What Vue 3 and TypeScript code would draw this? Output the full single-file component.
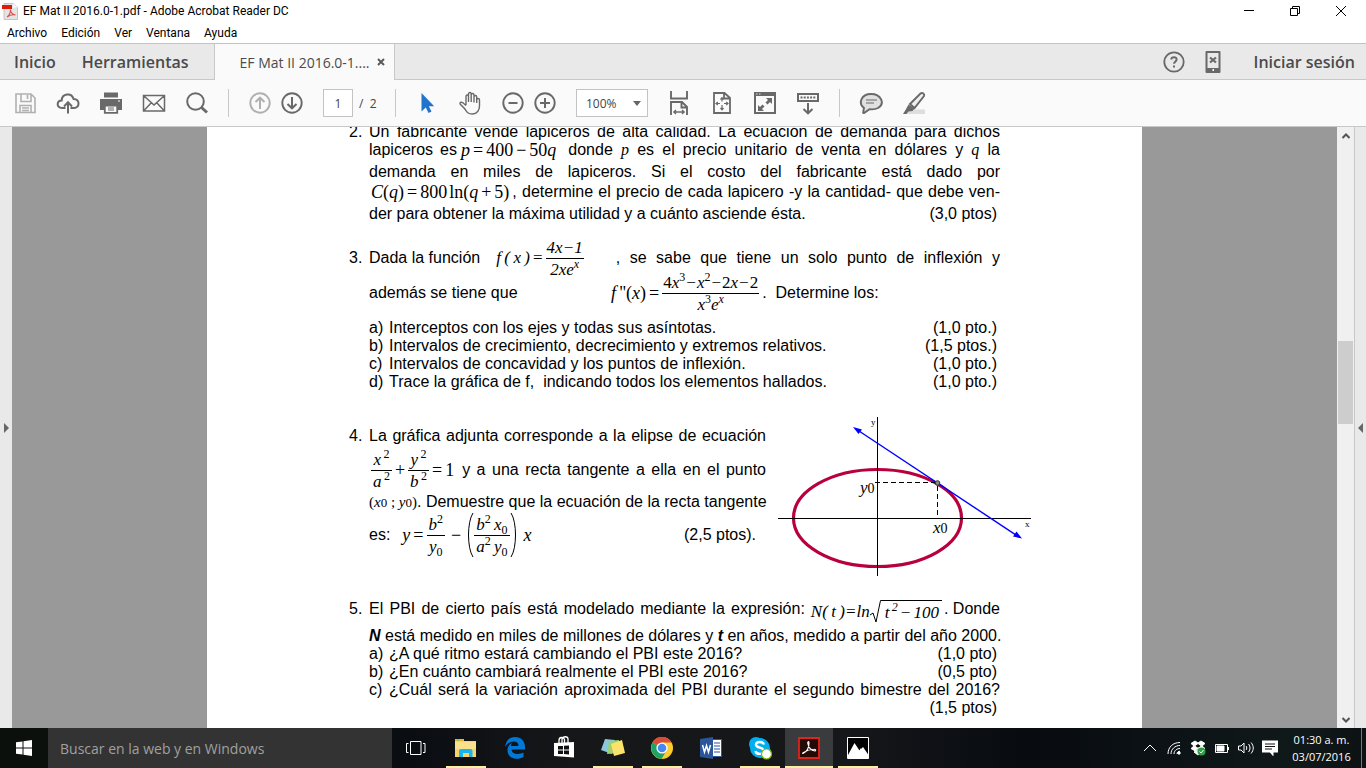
<script setup lang="ts">
import { ref } from 'vue'

const menus: string[] = ['Archivo', 'Edición', 'Ver', 'Ventana', 'Ayuda']
const page = ref('1')
const zoom = ref('100%')
const thumb = { top: 34.8, height: 14.6 }

interface Part { mark: string; text: string; points: string }
const functionParts: Part[] = [
  { mark: 'a)', text: 'Interceptos con los ejes y todas sus asíntotas.', points: '(1,0 pto.)' },
  { mark: 'b)', text: 'Intervalos de crecimiento, decrecimiento y extremos relativos.', points: '(1,5 ptos.)' },
  { mark: 'c)', text: 'Intervalos de concavidad y los puntos de inflexión.', points: '(1,0 pto.)' },
  { mark: 'd)', text: 'Trace la gráfica de f,\u00a0 indicando todos los elementos hallados.', points: '(1,0 pto.)' },
]
const gdpParts: Part[] = [
  { mark: 'a)', text: '¿A qué ritmo estará cambiando el PBI este 2016?', points: '(1,0 pto)' },
  { mark: 'b)', text: '¿En cuánto cambiará realmente el PBI este 2016?', points: '(0,5 pto)' },
]
</script>

<template>
  <div class="desktop">
    <header class="titlebar">
      <svg class="app-icon" width="16" height="17" viewBox="0 0 16 17">
        <path d="M2 .5h9l4.500 4V16.500H2z" fill="#e4e4e4" stroke="#c4c4c4" />
        <path d="M11 .5v4h4.500z" fill="#fafafa" />
        <path d="M0 2h10v4H0z" fill="#e01b0c" />
        <path d="M5 14c2-1.500 3.500-4 3.500-7.500 0 3 2 5 5 5.500-3-.6-6 .3-8.500 2z" fill="none" stroke="#e0504a" stroke-width="1.100" />
      </svg>
      <h1>EF Mat II 2016.0-1.pdf - Adobe Acrobat Reader DC</h1>
      <div class="window-controls">
        <button aria-label="Minimizar"><svg width="12" height="12" viewBox="0 0 12 12"><path d="M1 5.500h10" /></svg></button>
        <button aria-label="Restaurar"><svg width="12" height="12" viewBox="0 0 12 12"><path d="M1.500 3.500h7v7h-7zM3.500 3.500v-2h7v7h-2" /></svg></button>
        <button aria-label="Cerrar"><svg width="12" height="12" viewBox="0 0 12 12"><path d="M1 1l10 10M11 1L1 11" /></svg></button>
      </div>
    </header>

    <nav class="menubar"><button v-for="m in menus" :key="m">{{ m }}</button></nav>

    <div class="tabs">
      <button class="tab home">Inicio</button>
      <button class="tab tools">Herramientas</button>
      <div class="tab document">
        <span>EF Mat II 2016.0-1....</span>
        <button aria-label="Cerrar pestaña"><svg width="8" height="8" viewBox="0 0 8 8"><path d="M1 1l6 6M7 1L1 7" stroke="#5b5b5b" stroke-width="2" /></svg></button>
      </div>
      <div class="account">
        <button aria-label="Ayuda"><svg class="ic" width="24" height="24" viewBox="0 0 24 24">
          <circle cx="12" cy="12" r="9.700" stroke-width="1.800" />
          <path d="M9.300 9.500c.2-3.200 5.400-3 5.300 0 0 2-2.500 2-2.500 4.200M12 15.500v2" stroke-width="2" />
        </svg></button>
        <button aria-label="Dispositivo móvil"><svg class="ic" width="24" height="24" viewBox="0 0 24 24">
          <path d="M5.500 2h13v20h-13z" stroke-width="2" stroke-linejoin="round" /><path d="M5 18h14v4H5z" class="fill" />
          <path d="M9 7.500l6 5M15 7.500l-6 5" stroke-width="2.200" /><path d="M11.500 19h1.500v2h-1.500z" fill="#fff" stroke="none" />
        </svg></button>
        <button class="signin">Iniciar sesión</button>
      </div>
    </div>

    <div class="toolbar">
      <button class="off" aria-label="Guardar"><svg class="ic" width="24" height="24" viewBox="0 0 24 24">
        <path d="M3 3h15l4 4v14.500H3zM8 3v7.500h10V3M14.500 4v4M7 21v-6.500h11V21M9 17h7M9 19.500h7" stroke-width="1.600" />
      </svg></button>
      <button aria-label="Subir"><svg class="ic" width="24" height="24" viewBox="0 0 24 24">
        <path d="M9.500 17H6c-6 0-5.500-7.500-.3-7.600C6 2.500 15.500 1 17.600 8c6.500-.2 6.500 9 .4 9h-3.500" stroke-width="2" />
        <path d="M12 22.500V12M8 15.500l4-4.200 4 4.200" stroke-width="2" />
      </svg></button>
      <button aria-label="Imprimir"><svg class="ic" width="24" height="24" viewBox="0 0 24 24">
        <path d="M5 1.500h14v5H5zM1 8h22v11h-4v-4.500H5V19H1z" class="fill" />
        <path d="M5.800 14.500h12.400v7.300H5.800z" stroke-width="1.800" fill="#fafafa" /><path d="M9 17h6M9 19h6" stroke-width="1" /><path d="M19 10h2" stroke="#fff" />
      </svg></button>
      <button aria-label="Correo"><svg class="ic" width="24" height="24" viewBox="0 0 24 24">
        <path d="M1.500 4.500h21v15.500h-21zM2 5l10 9L22 5M2 19.500l7.500-8M22 19.500l-7.500-8" stroke-width="1.500" />
      </svg></button>
      <button aria-label="Buscar"><svg class="ic" width="24" height="24" viewBox="0 0 24 24">
        <circle cx="10.500" cy="10.500" r="8.300" stroke-width="2" /><path d="M16.500 16.500l5.500 5" stroke-width="3" />
      </svg></button>
      <i class="sep"></i>
      <div class="pair">
        <button class="off" aria-label="Página anterior"><svg class="ic" width="24" height="24" viewBox="0 0 24 24">
          <circle cx="12" cy="12" r="9.700" stroke-width="1.900" /><path d="M12 18V7M7.500 11L12 6.700l4.500 4.300" stroke-width="2" />
        </svg></button>
        <button aria-label="Página siguiente"><svg class="ic" width="24" height="24" viewBox="0 0 24 24">
          <circle cx="12" cy="12" r="9.700" stroke-width="1.900" /><path d="M12 6v11M7.500 13l4.500 4.300 4.500-4.300" stroke-width="2" />
        </svg></button>
      </div>
      <div class="pager">
        <input id="page" v-model="page" aria-label="Página" />
        <label for="page">/&nbsp; 2</label>
      </div>
      <i class="sep"></i>
      <button aria-label="Selección"><svg width="24" height="24" viewBox="0 0 24 24">
        <path d="M6.500 2v18.500l4.300-4 2.700 5.500 3-1.500-2.700-5.300h5.400z" fill="#2273cc" />
      </svg></button>
      <button aria-label="Mano"><svg class="ic" width="24" height="24" viewBox="0 0 24 24">
        <path d="M8 14V5.500c0-2 2.500-2 2.500 0V11M10.500 5V3c0-2 2.700-2 2.700 0v8M13.200 4c0-2 2.800-2 2.800 0v7.500M16 6c0-2 2.700-2 2.700 0v6M18.700 9c0-2 2.800-2 2.800 0v6c0 4-2.500 8-7 8-5 0-6-2.500-8-5.500l-4-4c-1.500-2 .8-3 2.300-1.700L8 14.500" stroke-width="1.400" />
      </svg></button>
      <div class="pair">
        <button aria-label="Alejar"><svg class="ic" width="24" height="24" viewBox="0 0 24 24">
          <circle cx="12" cy="12" r="9.700" stroke-width="1.900" /><path d="M7.500 12h9" stroke-width="2" />
        </svg></button>
        <button aria-label="Acercar"><svg class="ic" width="24" height="24" viewBox="0 0 24 24">
          <circle cx="12" cy="12" r="9.700" stroke-width="1.900" /><path d="M7 12h10M12 7v10" stroke-width="2" />
        </svg></button>
      </div>
      <div class="zoom">
        <select v-model="zoom" aria-label="Nivel de zoom"><option>100%</option><option>125%</option></select>
        <svg width="8" height="5" viewBox="0 0 8 5"><path d="M0 0h8L4 5z" fill="#666" /></svg>
      </div>
      <button aria-label="Ajustar ancho"><svg class="ic" width="24" height="24" viewBox="0 0 24 24">
        <path d="M4 0v7.500h16V0M4 24V11h11l5 5v8M14.500 11v5.500H20" stroke-width="1.900" />
        <path d="M7 21h10M9 19l-2.200 2L9 23M15 19l2.200 2-2.200 2" stroke-width="1.300" />
      </svg></button>
      <button aria-label="Ajustar página"><svg class="ic" width="24" height="24" viewBox="0 0 24 24">
        <path d="M4 2h10.500l5.500 5v15H4zM14 2v5.500h6" stroke-width="1.800" />
        <path d="M12 7v3.500M12 14v4.500M6 12.500h4M14 12.500h4M10.500 8.500L12 6.700l1.500 1.800M10.500 17l1.500 1.800 1.500-1.800M7.800 11L6 12.500 7.800 14M16.200 11l1.800 1.500-1.800 1.500" stroke-width="1.200" />
      </svg></button>
      <button aria-label="Pantalla completa"><svg class="ic" width="24" height="24" viewBox="0 0 24 24">
        <path d="M2 2h20v20H2z" stroke-width="2" /><path d="M1 1h22v4H1z" class="fill" />
        <path d="M3 3h1.500M6 3h1.500" stroke="#ddd" stroke-width="1" /><path d="M19 7v6l-2-2-2.500 2.500-2-2L15 9l-2-2zM5 20v-6l2 2 2.500-2.500 2 2L9 18l2 2z" class="fill" />
      </svg></button>
      <button aria-label="Barra de herramientas"><svg class="ic" width="24" height="24" viewBox="0 0 24 24">
        <path d="M2 3h20v7H2z" stroke-width="2" /><path d="M4.500 6.500h15" stroke-width="2" stroke-dasharray="2 1.200" />
        <path d="M12 12v10M7.500 18l4.500 4.300 4.500-4.300" stroke-width="2" />
      </svg></button>
      <i class="sep"></i>
      <button aria-label="Comentario"><svg class="ic" width="24" height="24" viewBox="0 0 24 24">
        <path d="M5 17C-1 12.500 2 3 12 3s14.500 9.500 7 14c-3 1.700-6 1.500-8.500 1.200L5 22c-1 .2-1-.2-.8-1z" stroke-width="1.900" fill="#e0e0e0" />
        <path d="M7 9h11M7 12h8" stroke-width="1.200" />
      </svg></button>
      <button aria-label="Resaltar"><svg class="ic" width="24" height="24" viewBox="0 0 24 24">
        <path d="M8 18.500h15V23H5z" fill="#dedede" stroke="none" />
        <path d="M8 13L18.500 2.500c2-1.500 4.500.5 3.500 2.500L12.500 17z" stroke-width="1.900" fill="#f0f0f0" />
        <path d="M6.500 13.500l6 4-2 2.500-4 .5L4.500 23H1l2.500-4z" class="fill" />
      </svg></button>
    </div>

    <main class="workspace">
      <button class="rail left" aria-label="Mostrar panel izquierdo"><svg width="5" height="10" viewBox="0 0 5 10"><path d="M0 0l5 5-5 5z" fill="#666" /></svg></button>
      <div class="canvas">
        <article class="paper">
          <section class="question first">
            <b class="number">2.</b>
            <div>
              <p class="justify">Un fabricante vende lapiceros de alta calidad. La ecuación de demanda para dichos</p>
              <p class="line">
                <span class="lead-wide">lapiceros es</span>
                <span class="math"><i>p</i><s>=</s>400<s>−</s>50<i>q</i></span>
                <span class="justify after-mid">donde <i class="var">p</i> es el precio unitario de venta en dólares y <i class="var">q</i> la</span>
              </p>
              <p class="justify gap-4">demanda en miles de lapiceros. Si el costo del fabricante está dado por</p>
              <p class="line gap-2 indent">
                <span class="math"><i>C</i>(<i>q</i>)<s>=</s>800<em>ln</em>(<i>q</i><s>+</s>5)</span>
                <span class="justify after-thin">, determine el precio de cada lapicero -y la cantidad- que debe ven-</span>
              </p>
              <p class="line gap-4"><span>der para obtener la máxima utilidad y a cuánto asciende ésta.</span><span class="points">(3,0 ptos)</span></p>
            </div>
          </section>

          <section class="question third">
            <b class="number">3.</b>
            <div>
              <p class="line">
                <span>Dada la función</span>
                <span class="math after-wide slanted">f&thinsp;(&thinsp;x&thinsp;)<s>=</s><span class="frac"><span>4x<s>−</s>1</span><span>2xe<sup>x</sup></span></span></span>
                <span class="justify after-far">, se sabe que tiene un solo punto de inflexión y</span>
              </p>
              <p class="line gap-17">
                <span class="wide-cell">además se tiene que</span>
                <span class="math"><i>f</i>&thinsp;''(<i>x</i>)<s>=</s><span class="frac"><span>4<i>x</i><sup>3</sup><s>−</s><i>x</i><sup>2</sup><s>−</s>2<i>x</i><s>−</s>2</span><span><i>x</i><sup>3</sup><i>e</i><sup><i>x</i></sup></span></span></span>
                <span class="after-thin">.&nbsp; Determine los:</span>
              </p>
              <ol class="parts gap-17">
                <li v-for="p in functionParts" :key="p.mark" class="line"><span class="mark">{{ p.mark }}</span><span>{{ p.text }}</span><span class="points">{{ p.points }}</span></li>
              </ol>
            </div>
          </section>

          <section class="question fourth">
            <b class="number">4.</b>
            <div class="with-figure">
              <div>
                <p class="justify">La gráfica adjunta corresponde a la elipse de ecuación</p>
                <p class="line gap-16 indent">
                  <span class="math roomy"><span class="frac"><span><i>x</i><sup>&thinsp;2</sup></span><span><i>a</i><sup>&thinsp;2</sup></span></span><s>+</s><span class="frac"><span><i>y</i><sup>&thinsp;2</sup></span><span><i>b</i><sup>&thinsp;2</sup></span></span><s>=</s>1</span>
                  <span class="justify after-near">y a una recta tangente a ella en el punto</span>
                </p>
                <p class="line gap-14"><span class="pt">(<i>x</i><small>0</small> ; <i>y</i><small>0</small>)</span><span>. Demuestre que la ecuación de la recta tangente</span></p>
                <p class="line gap-15">
                  <span>es:</span>
                  <span class="math roomy after-mid"><i>y</i><s>=</s><span class="frac"><span><i>b</i><sup>2</sup></span><span><i>y</i><sub>0</sub></span></span><s class="loose">−</s>
                    <svg class="paren" width="7" height="46" viewBox="0 0 7 46"><path d="M6 1C0 10 0 36 6 45" /></svg>
                    <span class="frac"><span><i>b</i><sup>2</sup>&thinsp;<i>x</i><sub>0</sub></span><span><i>a</i><sup>2</sup>&thinsp;<i>y</i><sub>0</sub></span></span>
                    <svg class="paren" width="7" height="46" viewBox="0 0 7 46"><path d="M1 1c6 9 6 35 0 44" /></svg>
                    <i class="tail">x</i></span>
                  <span class="points far">(2,5 ptos).</span>
                </p>
              </div>
              <svg class="figure" width="254" height="159" viewBox="0 0 254 159">
                <ellipse cx="99.500" cy="101" rx="84" ry="48.500" fill="none" stroke="#b8003c" stroke-width="3.200" />
                <path d="M0 101.500h253M99.500 0v159" stroke="#000" fill="none" />
                <path d="M97 65.500h62" stroke="#000" stroke-dasharray="5 3" /><path d="M159.500 69v31" stroke="#000" stroke-dasharray="5 3" />
                <path d="M78 12l163 108" stroke="#00f" stroke-width="1.400" />
                <path d="M75 10l9 2.500-3.500 4.500zM244 121.500l-9-2 3.500-5z" fill="#00f" />
                <circle cx="159.500" cy="66" r="2.300" fill="#888" stroke="#333" />
                <text x="82" y="76" class="label"><tspan>y</tspan><tspan class="idx">0</tspan></text>
                <text x="155" y="116" class="label"><tspan>x</tspan><tspan class="idx">0</tspan></text>
                <text x="93" y="8" class="axis">y</text><text x="247" y="110" class="axis">x</text>
              </svg>
            </div>
          </section>

          <section class="question fifth">
            <b class="number">5.</b>
            <div>
              <p class="line">
                <span class="justify">El PBI de cierto país está modelado mediante la expresión:</span>
                <span class="math slanted radical-expr">N(&thinsp;t&thinsp;)=ln<svg class="root" width="11" height="24" viewBox="0 0 11 24"><path d="M0 15l3-2 3 9L10.500.5H11" /></svg><span class="radicand">t<sup>&thinsp;2</sup><s>−</s>100</span></span>
                <span>. Donde</span>
              </p>
              <p class="gap-9"><b><i>N</i></b> está medido en miles de millones de dólares y <b><i>t</i></b> en años, medido a partir del año 2000.</p>
              <ol class="parts">
                <li v-for="p in gdpParts" :key="p.mark" class="line"><span class="mark">{{ p.mark }}</span><span>{{ p.text }}</span><span class="points">{{ p.points }}</span></li>
                <li class="line"><span class="mark">c)</span><span class="justify">¿Cuál será la variación aproximada del PBI durante el segundo bimestre del 2016?</span></li>
              </ol>
              <p class="line"><span class="points">(1,5 ptos)</span></p>
            </div>
          </section>
        </article>
      </div>
      <div class="scrollbar">
        <button aria-label="Subir"><svg width="8" height="6" viewBox="0 0 8 6"><path d="M.5 5L4 1.500 7.500 5" /></svg></button>
        <div class="track"><div class="thumb" :style="{ top: thumb.top + '%', height: thumb.height + '%' }"></div></div>
        <button aria-label="Bajar"><svg width="8" height="6" viewBox="0 0 8 6"><path d="M.5 1L4 4.500 7.500 1" /></svg></button>
      </div>
      <button class="rail right" aria-label="Mostrar panel derecho"><svg width="5" height="10" viewBox="0 0 5 10"><path d="M5 0L0 5l5 5z" fill="#666" /></svg></button>
    </main>

    <footer class="taskbar">
      <button class="start" aria-label="Inicio"><svg width="16" height="16" viewBox="0 0 16 16"><path d="M0 2.300l6.500-.9v6.100H0zM7.500 1.200L16 0v7.500H7.500zM0 8.500h6.500v6.100L0 13.700zM7.500 8.500H16V16l-8.500-1.200z" fill="#fff" /></svg></button>
      <input class="search" type="search" placeholder="Buscar en la web y en Windows" aria-label="Buscar en la web y en Windows" />
      <button class="start" aria-label="Vista de tareas"><svg width="22" height="16" viewBox="0 0 22 16"><path d="M5.500 1.500h10.500v13H5.500zM3.500 3.500h-2v9h2M18 3.500h2v9h-2" fill="none" stroke="#fff" /></svg></button>
      <div class="apps">
        <button class="open" aria-label="Explorador de archivos"><svg width="24" height="24" viewBox="0 0 24 24">
          <path d="M1 3h9v2h12v16H1z" fill="#f7d46b" /><path d="M1 3h9v2H1z" fill="#e9b92d" /><path d="M3 3.500h2v1H3z" fill="#2ca" /><path d="M1 6h21v7H1z" fill="#fbe08b" />
          <path d="M5 21v-6c0-1 .5-2 2-2h9.500c1.500 0 2 1 2 2v6H15v-4H9v4z" fill="#19b5ee" />
        </svg></button>
        <button aria-label="Edge"><svg width="24" height="24" viewBox="0 0 24 24">
          <path d="M2 11C3 4 7 1 12 1c6 0 10 4 10 10v2.500H8.500c.2 5 7.500 5.500 12 3V21c-6 3.500-16 2-16-7 0-3.500 2-6 5-7.500-1 1-1.500 2-1.500 3.500h7.500c.2-6.500-9.500-6-13.500 1z" fill="#0078d7" />
        </svg></button>
        <button aria-label="Tienda"><svg width="24" height="24" viewBox="0 0 24 24">
          <path d="M2 7l20-1v15.500L2 20z" fill="#fff" /><path d="M7 8V4.500C7 .8 11.500.5 12.500 3.500V7M10 7V3c1-3 6-3 6 0v4" fill="none" stroke="#fff" stroke-width="1.300" />
          <path d="M6 10h5v3.500H6zM12 9.800l5-.3v4h-5zM6 14.500h5V18H6zM12 14.500h5v4l-5-.4z" fill="#111" />
        </svg></button>
        <button class="open" aria-label="Notas"><svg width="24" height="24" viewBox="0 0 24 24">
          <path d="M4 3l10 1-3 14-11-4z" fill="#8cc7dc" /><path d="M8 5l10-1v13L6 18z" fill="#9cd070" /><path d="M10 8l11-4 3 13-11 3z" fill="#fbe36b" />
        </svg></button>
        <button class="open" aria-label="Chrome"><svg width="24" height="24" viewBox="0 0 24 24">
          <circle cx="12" cy="12" r="11" fill="#fbcd2e" /><path d="M12 12L2.500 6.500C6-1 18-1 21.500 6.500H12z" fill="#de4a3a" /><path d="M2.500 6.500C-1 13 3 22 11.500 23l5-8.500L12 12z" fill="#1ea362" />
          <circle cx="12" cy="12" r="5.600" fill="#fff" /><circle cx="12" cy="12" r="4.300" fill="#4688f1" />
        </svg></button>
        <button aria-label="Word"><svg width="24" height="24" viewBox="0 0 24 24">
          <path d="M12 3.500h10.500v17H12z" fill="#fff" stroke="#2b579a" /><path d="M15 7h6M15 10h6M15 13h6M15 16h6" stroke="#2b579a" stroke-width="1.200" />
          <path d="M1 3l13-2v22L1 21z" fill="#2b579a" /><path d="M3.500 9l2 7 2-6.500 2 6.500 2-7" fill="none" stroke="#fff" stroke-width="1.500" />
        </svg></button>
        <button class="open" aria-label="Skype"><svg width="24" height="24" viewBox="0 0 24 24">
          <circle cx="8" cy="8" r="7" fill="#00aff0" /><circle cx="12" cy="12" r="10" fill="#00aff0" /><circle cx="17" cy="16" r="6" fill="#00aff0" />
          <path d="M16 8.500C15 5 7.500 5 8 9c.4 3.300 8 2 8 6 0 3.800-8 3.800-8.500 0" fill="none" stroke="#fff" stroke-width="2.400" />
          <circle cx="18.500" cy="18" r="5" fill="#fff" stroke="#7fba00" stroke-width="1.200" />
        </svg></button>
        <button class="open active" aria-label="Acrobat Reader"><svg width="24" height="24" viewBox="0 0 24 24">
          <path d="M2 2h20v20H2z" fill="#260a08" stroke="#e2231a" stroke-width="1.800" />
          <path d="M6 17.500c3-1.500 6-5.500 6-10.500-.1-2-1.600-1.600-1.200.3C11.500 11 14 14.500 18 15c1.300-.3.800-1.800-1-1.700-3 .1-7 1-10.500 3.200-1 .8-1.200 1.200-.5 1z" fill="none" stroke="#fff" stroke-width="1.100" />
        </svg></button>
        <button class="open" aria-label="Fotos"><svg width="24" height="24" viewBox="0 0 24 24">
          <path d="M1.500 1.500h21v21h-21z" fill="#000" stroke="#fff" /><path d="M2 19l6.500-12 5 7.500L17 11l5.500 8v3.500H2z" fill="#fff" /><path d="M13 15l2-3 1 3" fill="#fff" />
        </svg></button>
      </div>
      <div class="tray">
        <button aria-label="Iconos ocultos"><svg width="16" height="16" viewBox="0 0 16 16"><path d="M2 11l6-6 6 6" /></svg></button>
        <button aria-label="Red"><svg width="16" height="16" viewBox="0 0 16 16"><path d="M2 14C2 7 7 2.500 14 2.500M5 14c0-5 4-8.500 9-8.500M8 14c0-3.500 3-5.500 6-5.500M11 14c0-2 1.500-2.700 3-2.700" /><path d="M12 12h2v2h-2z" fill="#fff" /></svg></button>
        <button aria-label="Dropbox"><svg width="16" height="16" viewBox="0 0 16 16"><path d="M5 1l3 2 3-2 4 2.500L12 6l3 2.500-4 2.300-3-2-3 2-4-2.300L4 6 1 3.500zM4 12l4 3 3-2.500-3-2.500z" fill="#fff" stroke="none" /><path d="M8 3.500L11.500 6 8 8.300 4.500 6z" fill="#111" stroke="none" /><circle cx="11.500" cy="11.500" r="4" fill="#2da044" stroke="none" /><path d="M9.500 11.500l1.500 1.500 2.500-3" /></svg></button>
        <button aria-label="Batería"><svg width="16" height="16" viewBox="0 0 16 16"><path d="M1.500 4.500h12v8h-12zM14.500 7v3" /><path d="M3 6h7v5H3z" fill="#fff" stroke="none" /></svg></button>
        <button aria-label="Volumen"><svg width="16" height="16" viewBox="0 0 16 16"><path d="M.5 6v4H3l3 3V3L3 6zM8 6c1 1 1 3 0 4M10.500 4c2 2.500 2 5.500 0 8M13 2.500c3 3.500 3 7.500 0 11" /></svg></button>
        <button aria-label="Notificaciones"><svg width="16" height="16" viewBox="0 0 16 16"><path d="M0 1h16v11h-5v3.500L8 12H0z" fill="#fff" stroke="none" /><path d="M3 4h10M3 6.500h10M3 9h7" class="dark" /></svg></button>
        <button class="clock"><span>01:30 a. m.</span><span>03/07/2016</span></button>
      </div>
    </footer>
  </div>
</template>

<style>
html, body { margin: 0; }
</style>

<style scoped>
.desktop { display: flex; flex-direction: column; height: 100vh; overflow: hidden; background: #fff; color: #000; font-family: "Open Sans", "Noto Sans", sans-serif; font-size: 11px; }
button { border: 0; padding: 0; margin: 0; background: none; font: inherit; color: inherit; display: flex; align-items: center; justify-content: center; flex: none; }
svg { flex: none; display: block; }
h1, p, ol { margin: 0; padding: 0; font-weight: normal; }

.titlebar, .menubar { font-family: Roboto, "Open Sans", sans-serif; font-size: 12px; }
.titlebar { display: flex; align-items: center; height: 22px; padding: 0 2px; flex: none; }
.titlebar h1 { font-size: 12px; margin-left: 5px; flex: 1; }
.window-controls { display: flex; }
.window-controls button { width: 46px; height: 20px; }
.window-controls path { fill: none; stroke: #000; }
.menubar { display: flex; gap: 14px; height: 21px; padding-left: 7px; flex: none; }

.tabs { display: flex; height: 36px; flex: none; background: #e9e9e9; border-top: 1px solid #c3c3c3; font-size: 16px; color: #4b4b4b; }
.tab { border-bottom: 1px solid #c8c8c8; font-weight: 600; }
.home { padding-left: 14px; }
.tools { padding: 0 25px 0 26px; }
.document { display: flex; align-items: center; justify-content: space-between; width: 181px; box-sizing: border-box; padding: 0 9px 0 25px; background: #fafafa; border: solid #c8c8c8; border-width: 0 1px; font-size: 14px; font-weight: 400; }
.account { flex: 1; display: flex; align-items: center; justify-content: flex-end; gap: 15px; padding-right: 11px; border-bottom: 1px solid #c8c8c8; }
.signin { font-weight: 600; margin-left: 14px; }

.ic { fill: none; stroke: #696969; }
.ic .fill { fill: #696969; stroke: none; }
.toolbar { display: flex; align-items: center; gap: 19px; height: 47px; padding-left: 13px; flex: none; background: #fafafa; border-bottom: 1px solid #c8c8c8; box-sizing: border-box; font-size: 12px; color: #444; }
.off { opacity: .5; }
.sep { width: 1px; height: 28px; background: #c8c8c8; }
.pair { display: flex; gap: 8px; }
.pager { display: flex; align-items: center; gap: 6px; width: 53px; white-space: nowrap; }
.pager input { width: 30px; height: 28px; flex: none; box-sizing: border-box; border: 1px solid #c3c3c3; background: #fff; padding: 0; text-align: center; font: inherit; color: inherit; }
.zoom { position: relative; display: flex; }
.zoom select { appearance: none; width: 72px; height: 28px; box-sizing: border-box; border: 1px solid #c3c3c3; border-radius: 0; background: #fff; padding: 0 0 0 9px; font: inherit; color: inherit; }
.zoom svg { position: absolute; right: 7px; top: 12px; pointer-events: none; }

.workspace { display: flex; flex: 1; min-height: 0; }
.rail { width: 12px; background: #e9e9e9; box-sizing: border-box; }
.rail.right { border-left: 1px solid #c8c8c8; }
.canvas { flex: 1; display: flex; justify-content: center; background: #999; overflow: hidden; }
.paper { width: 935px; box-sizing: border-box; padding: 0 142px; background: #fff; font: 16px/18px "Liberation Sans", Arial, sans-serif; }
.question { display: grid; grid-template-columns: 20px minmax(0, 1fr); white-space: nowrap; }
.first { margin-top: -4px; }
.third, .fourth { margin-top: 26px; }
.fifth { margin-top: 24px; }
.number { font-weight: 400; }
.fourth .number { padding-top: 10px; }
.justify { display: block; white-space: normal; text-align-last: justify; }
span.justify { flex: 1; }
.line { display: flex; align-items: center; height: 18px; }
.indent { padding-left: 2px; }
.gap-2 { margin-top: 2px; }
.gap-4 { margin-top: 4px; }
.gap-9 { margin-top: 9px; }
.gap-14 { margin-top: 14px; }
.gap-15 { margin-top: 15px; }
.gap-16 { margin-top: 16px; }
.gap-17 { margin-top: 17px; }
.parts { list-style: none; }
.parts .justify { white-space: nowrap; }
.mark { width: 20px; flex: none; }
.points { margin-left: auto; margin-right: 3px; }
.points.far { margin-right: 10px; }
.lead-wide { width: 92px; text-align-last: justify; padding-right: 4px; box-sizing: border-box; }
.wide-cell { width: 242px; }
.after-thin { margin-left: 3px; }
.after-near { margin-left: 8px; }
.after-mid { margin-left: 12px; }
.after-wide { margin-left: 16px; }
.after-far { margin-left: 32px; }

.math { display: flex; align-items: center; font: 18px/20px "Liberation Serif", "Times New Roman", serif; white-space: nowrap; }
.math s { text-decoration: none; font-style: normal; margin: 0 3px; }
.math em { font-style: normal; margin-left: 2px; }
.math .loose { margin: 0 6px; }
.math sup, .math sub { font-size: 12px; line-height: 0; }
.math sup { vertical-align: 7px; }
.math sub { vertical-align: -4px; }
.math.slanted { font-style: italic; font-size: 17px; }
.frac { display: flex; flex-direction: column; align-items: stretch; text-align: center; font-size: 17px; }
.frac > span:first-child { border-bottom: 1px solid #000; padding: 1px 1px 0; }
.frac > span:last-child { padding: 1px 1px 0; }
.roomy .frac > span:first-child, .roomy .frac > span:last-child { padding: 1px 2px 0; }
.math .frac s { margin: 0 1px; }
.var, .pt { font-family: "Liberation Serif", "Times New Roman", serif; }
.pt { font-size: 15px; }
.pt small { font-size: 13px; }
.paren path, .root path { fill: none; stroke: #000; }
.tail { margin-left: 7px; }
.radical-expr { margin: 0 2px 0 6px; padding-top: 6px; }
.radicand { border-top: 1px solid #000; padding: 2px 3px 1px 4px; }

.with-figure { display: grid; grid-template-columns: 397px 254px; gap: 12px; }
.with-figure > div { padding-top: 10px; }
.label { font: italic 17px "Liberation Serif", serif; }
.idx { font-size: 14px; font-style: normal; }
.axis { font: 9px "Liberation Serif", serif; }

.scrollbar { display: flex; flex-direction: column; width: 17px; background: #f0f0f0; }
.scrollbar button { height: 17px; }
.scrollbar path { fill: none; stroke: #555; stroke-width: 2; }
.track { position: relative; flex: 1; }
.thumb { position: absolute; left: 1px; right: 1px; background: #cdcdcd; }

.taskbar { display: flex; height: 40px; flex: none; background: linear-gradient(90deg, #0b100c, #0a0d12 30%, #161719 42%, #15171a 62%, #080b10 75%, #10191a 95%, #0d1214); color: #fff; }
.start { width: 48px; }
.search { width: 344px; box-sizing: border-box; border: 0; border-radius: 0; background: #333; padding: 0 12px; font: 14px "Open Sans", sans-serif; color: #fff; appearance: none; }
.search::placeholder { color: #a0a0a0; opacity: 1; }
.apps { display: flex; gap: 1px; margin-left: 2px; }
.apps button { width: 48px; box-sizing: border-box; background: linear-gradient(#f9ef9f, #f9ef9f) bottom / 0 2px no-repeat; }
.apps .open { background-size: 40px 2px; }
.apps .active { background-color: #3a3b3d; background-size: 48px 2px; }
.tray { display: flex; margin-left: auto; margin-right: 4px; border-right: 1px solid #777; }
.tray button { width: 24px; }
.tray path { fill: none; stroke: #fff; }
.tray path[fill="#fff"] { fill: #fff; }
.tray path[fill="#111"] { fill: #111; }
.tray path.dark { stroke: #111; }
.tray .clock { width: 79px; flex-direction: column; line-height: 17px; }
</style>
